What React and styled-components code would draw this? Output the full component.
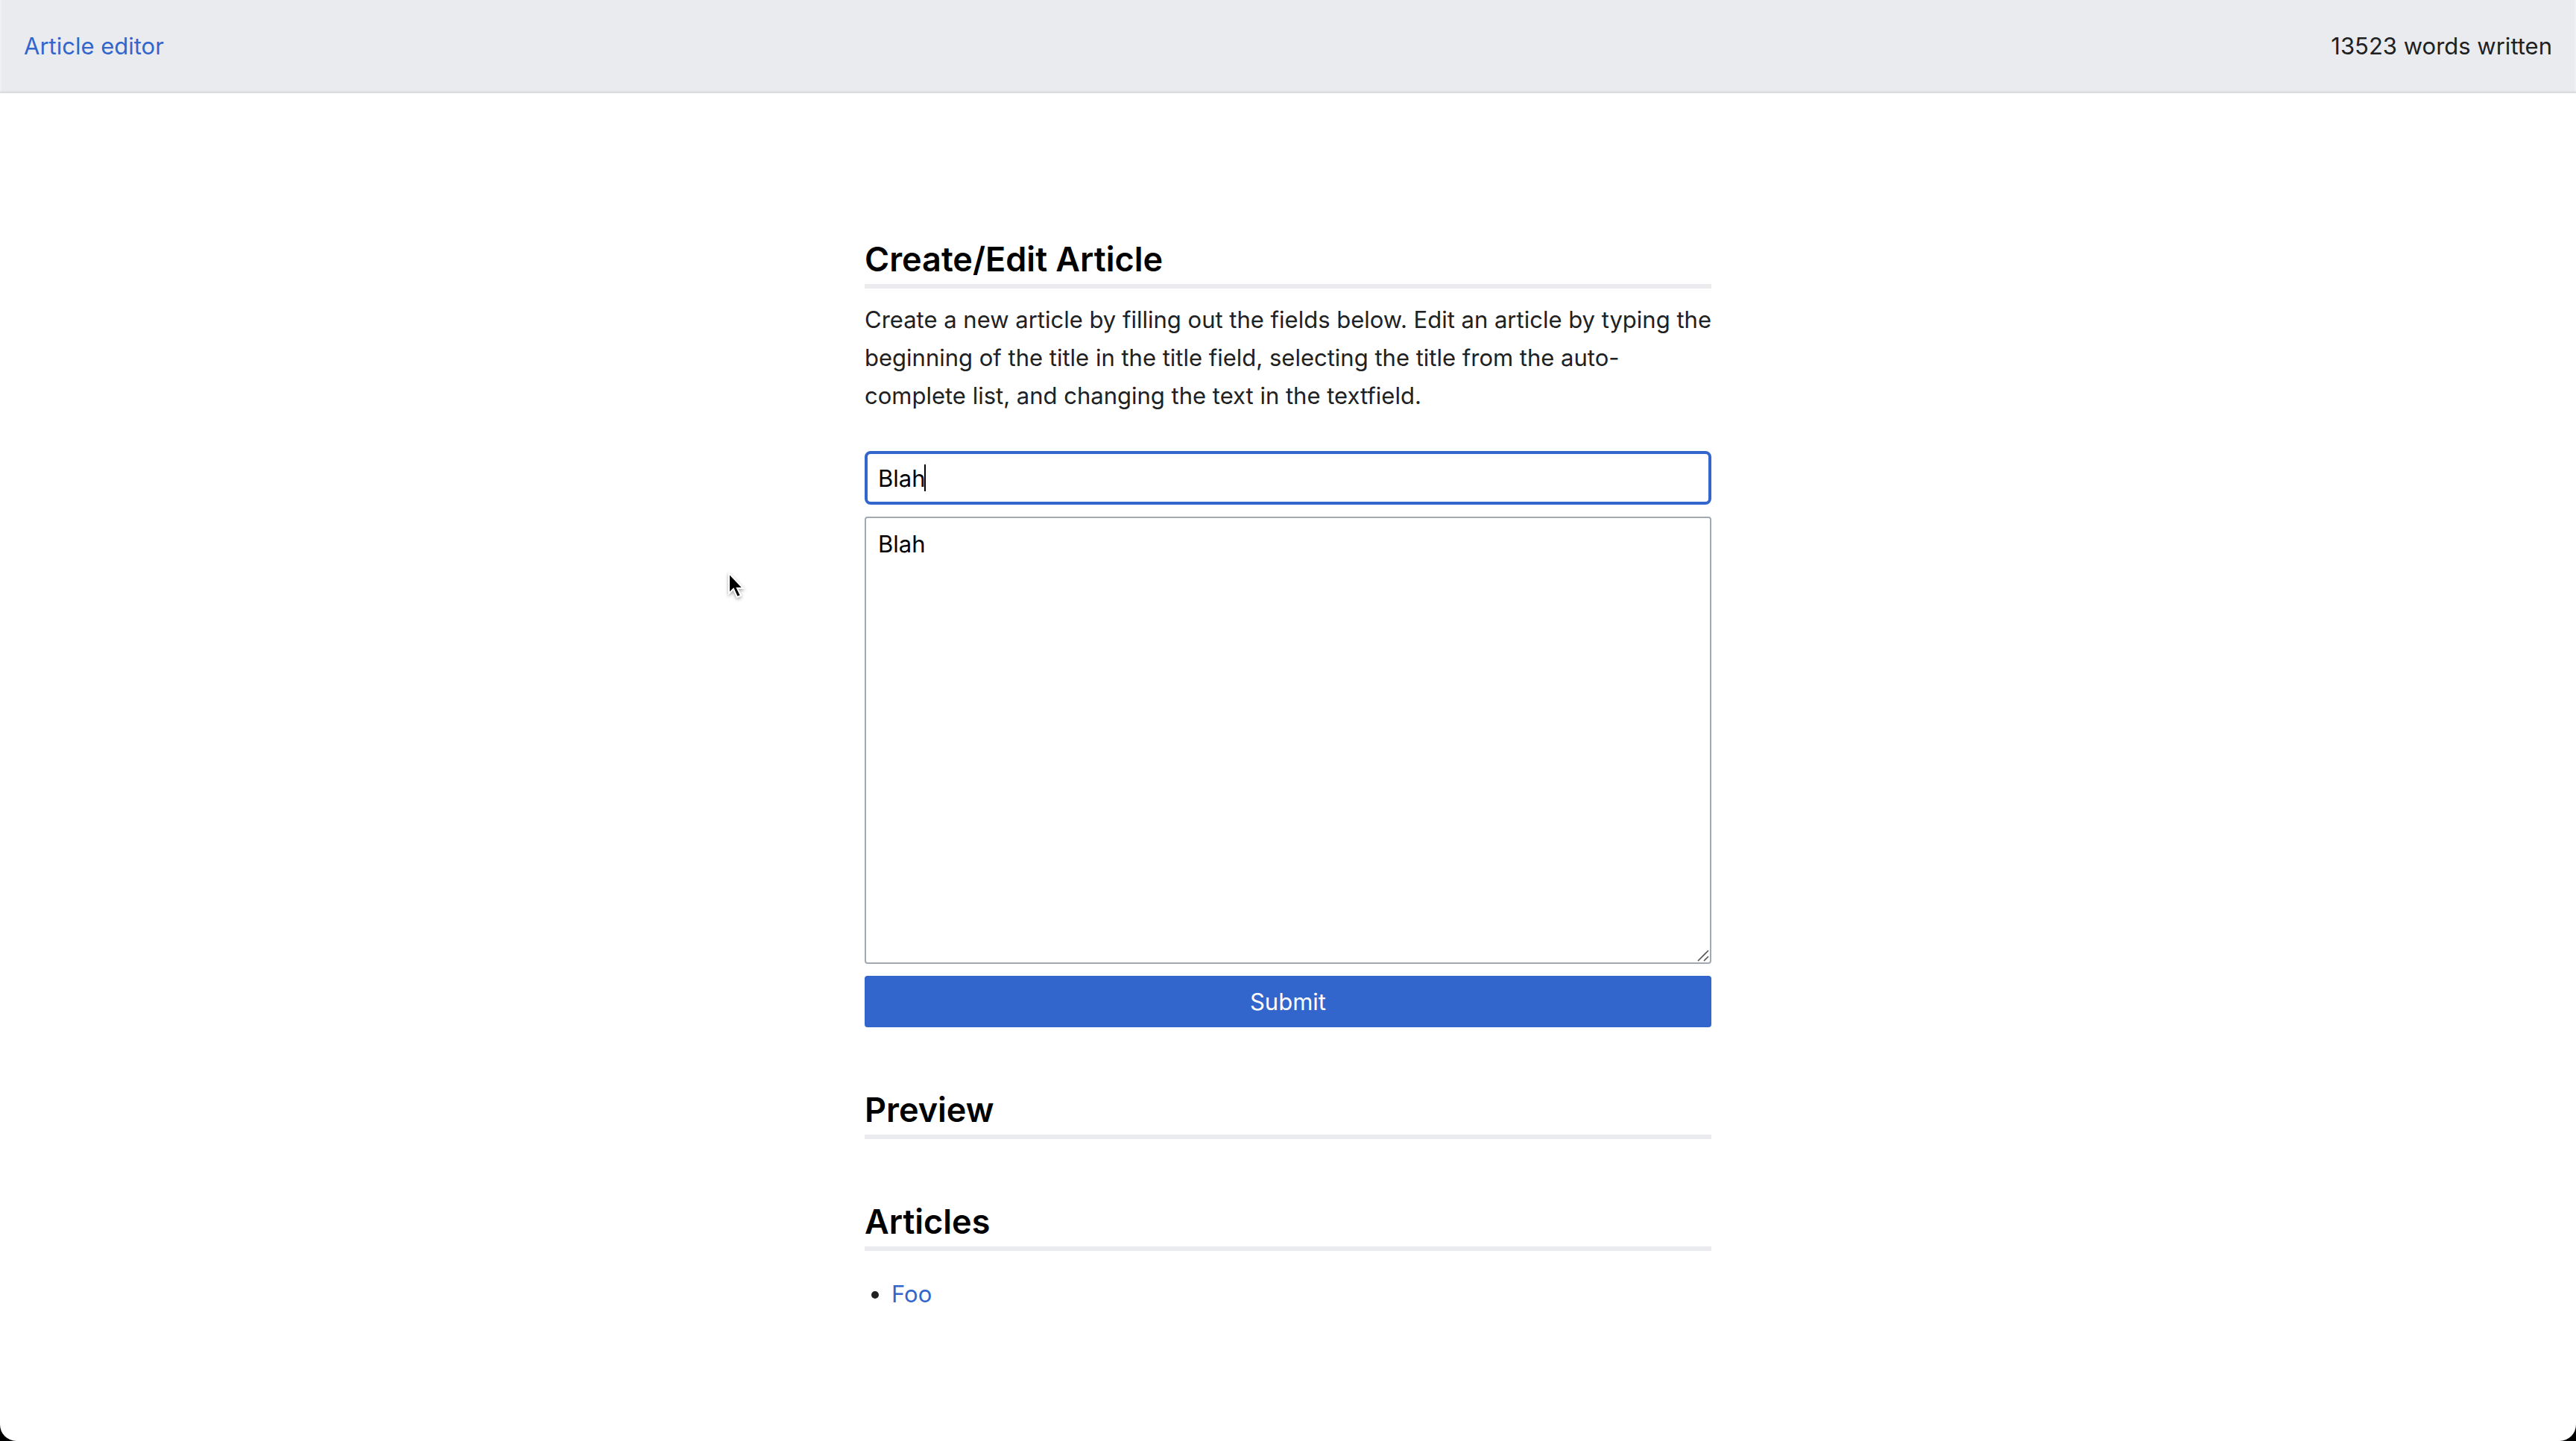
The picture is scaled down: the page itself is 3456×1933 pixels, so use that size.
import React, { useState } from "react";
import styled, { createGlobalStyle } from "styled-components";

const color = {
  accent: "#3366cc",
  text: "#202122",
  line: "#eaebef",
  field: "#a2a9b1",
};

const GlobalStyle = createGlobalStyle`
  *, *::before, *::after { box-sizing: border-box; }
  body {
    margin: 0;
    background: #000;
    color: ${color.text};
    font-family: Inter, "Liberation Sans", sans-serif;
    font-size: 31px;
    line-height: 51px;
  }
`;

const Page = styled.div`
  min-height: 100vh;
  background: #fff;
  border-radius: 0 0 22px 22px;
  overflow: hidden;
`;

const Header = styled.header`
  display: flex;
  align-items: center;
  justify-content: space-between;
  height: 125px;
  padding: 0 32px 2px;
  background: ${color.line};
  box-shadow: inset 0 -4px 3px -2px #d6d7db, inset 2px 0 #f0f1f4,
    inset -2px 0 #f0f1f4;
`;

const Link = styled.a`
  color: ${color.accent};
  text-decoration: none;
`;

const Main = styled.main`
  display: flex;
  flex-direction: column;
  gap: 80px;
  width: 100%;
  max-width: 1136px;
  margin: 0 auto;
  padding: 192px 0 128px;
`;

const Heading = styled.h2`
  margin: 0;
  padding-bottom: 2px;
  border-bottom: 6px solid ${color.line};
  color: #000;
  font-size: 45px;
  font-weight: 600;
  line-height: 62px;
`;

const Intro = styled.p`
  margin: 16px 0 49px;
`;

const Form = styled.form`
  display: flex;
  flex-direction: column;
  gap: 16px;
`;

const Field = styled.div`
  position: relative;
  display: flex;
`;

const TitleInput = styled.input`
  flex: 1;
  height: 72px;
  padding: 0 14px;
  border: 4px solid ${color.accent};
  border-radius: 8px;
  outline: none;
  background: #fff;
  color: #000;
  caret-color: transparent;
  font: inherit;
`;

const Caret = styled.span`
  position: absolute;
  top: 18px;
  left: 80px;
  width: 2px;
  height: 36px;
  background: #000;
`;

const BodyInput = styled.textarea`
  flex: 1;
  height: 600px;
  padding: 9px 16px;
  border: 2px solid ${color.field};
  border-radius: 4px;
  outline: none;
  background: #fff;
  color: #000;
  font: inherit;
  resize: none;
`;

const Grip = styled.svg`
  position: absolute;
  right: 3px;
  bottom: 3px;
  width: 16px;
  height: 16px;
  pointer-events: none;
`;

const SubmitButton = styled.button`
  height: 69px;
  padding: 0;
  border: 0;
  border-radius: 4px;
  background: ${color.accent};
  color: #fff;
  font: inherit;
  cursor: pointer;
`;

const List = styled.ul`
  margin: 32px 0 0;
  padding: 0 0 0 36px;
`;

const Pointer = styled.svg`
  position: absolute;
  top: 766px;
  left: 973px;
  width: 28px;
  height: 40px;
  filter: drop-shadow(0 2px 2px rgba(0, 0, 0, 0.35));
  pointer-events: none;
`;

const articles = ["Foo"];

export default function App() {
  const [title, setTitle] = useState("Blah");
  const [body, setBody] = useState("Blah");

  return (
    <>
      <GlobalStyle />
      <Page>
        <Header>
          <Link href="/">Article editor</Link>
          <span>13523 words written</span>
        </Header>
        <Main>
          <section>
            <Heading>Create/Edit Article</Heading>
            <Intro>
              Create a new article by filling out the fields below. Edit an
              article by typing the beginning of the title in the title field,
              selecting the title from the auto-complete list, and changing the
              text in the textfield.
            </Intro>
            <Form onSubmit={(event) => event.preventDefault()}>
              <Field>
                <TitleInput
                  type="text"
                  aria-label="Title"
                  value={title}
                  onChange={(event) => setTitle(event.target.value)}
                />
                <Caret />
              </Field>
              <Field>
                <BodyInput
                  aria-label="Article text"
                  value={body}
                  onChange={(event) => setBody(event.target.value)}
                />
                <Grip viewBox="0 0 16 16" aria-hidden="true">
                  <path
                    d="M1 15L15 1M9 15L15 9"
                    stroke="#555"
                    strokeWidth="1.6"
                    fill="none"
                  />
                </Grip>
              </Field>
              <SubmitButton type="submit">Submit</SubmitButton>
            </Form>
          </section>
          <section>
            <Heading>Preview</Heading>
          </section>
          <section>
            <Heading>Articles</Heading>
            <List>
              {articles.map((name) => (
                <li key={name}>
                  <Link href={`#${name}`}>{name}</Link>
                </li>
              ))}
            </List>
          </section>
        </Main>
      </Page>
      <Pointer viewBox="0 0 28 40" aria-hidden="true">
        <path
          d="M5 3V30L11 24L16 35L21 33L16 23H24Z"
          fill="#000"
          stroke="#fff"
          strokeWidth="2"
        />
      </Pointer>
    </>
  );
}
